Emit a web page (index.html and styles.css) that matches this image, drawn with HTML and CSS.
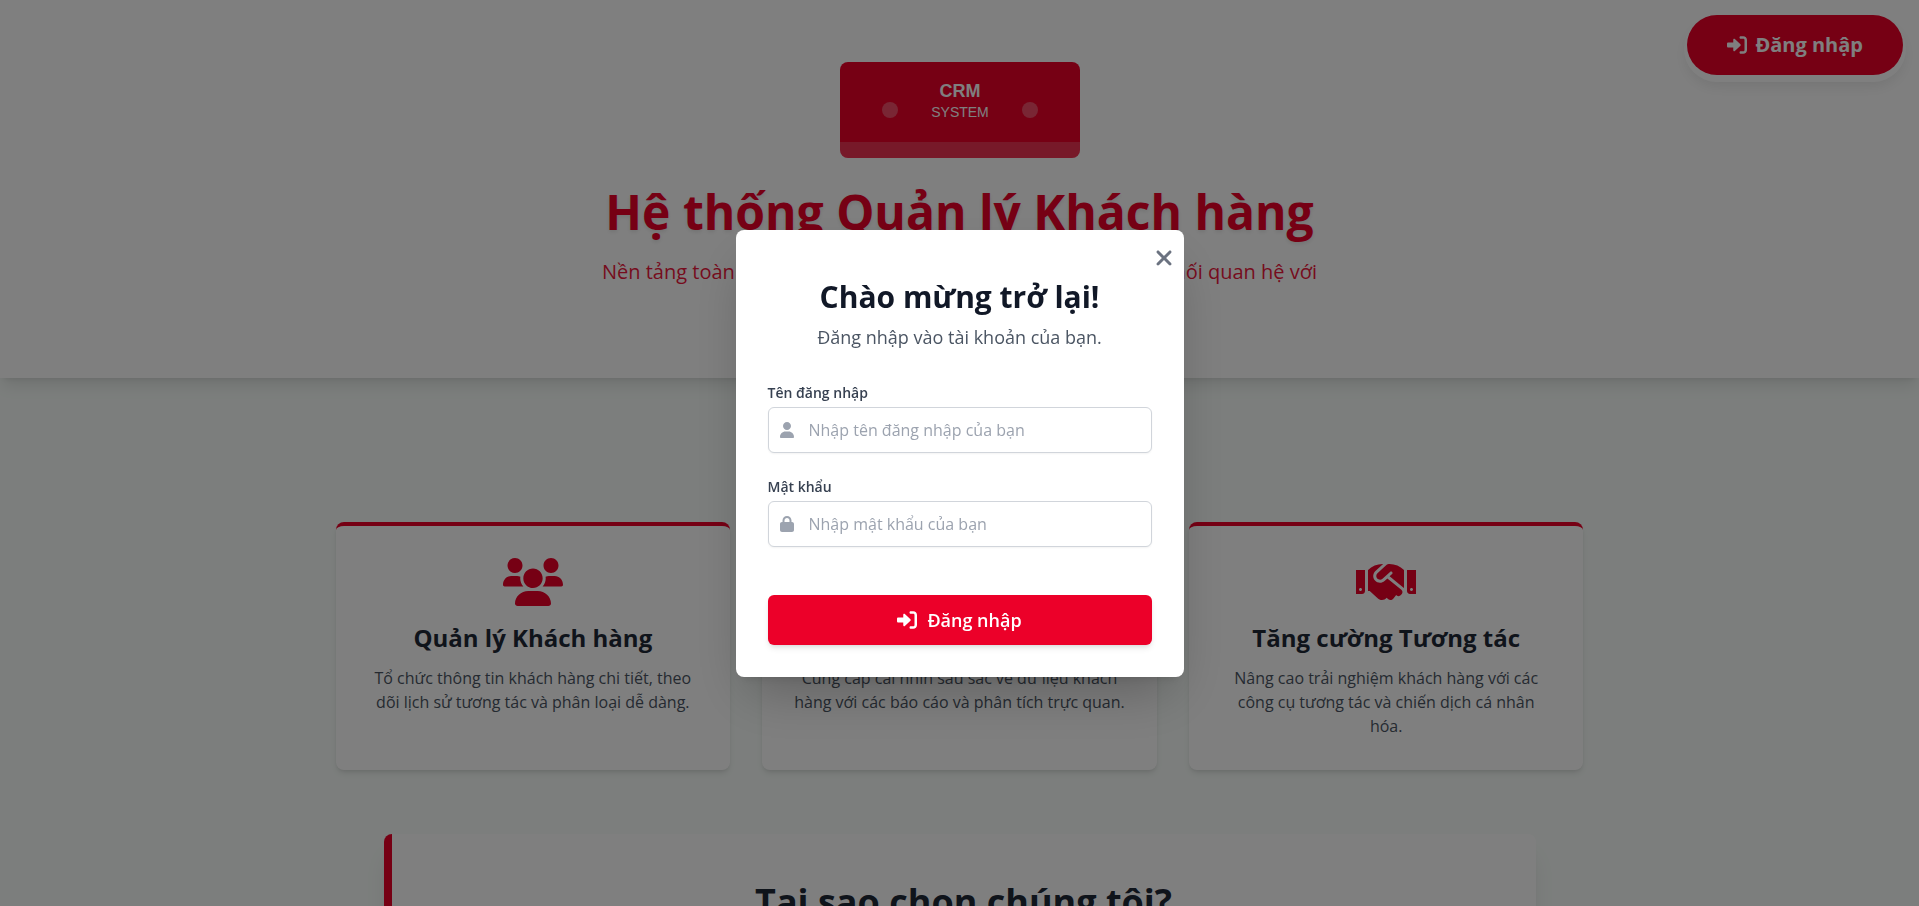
FILE: index.html
```html
<!DOCTYPE html>
<html lang="vi">
<head>
<meta charset="utf-8">
<meta name="viewport" content="width=device-width, initial-scale=1">
<title>Hệ thống Quản lý Khách hàng</title>
<link rel="stylesheet" href="styles.css">
</head>
<body>
<svg class="sprite" aria-hidden="true">
  <symbol id="sign-in" viewBox="0 0 512 512"><path d="M344.7 238.5l-144.1-136C193.7 95.97 183.4 94.17 174.6 97.95C165.8 101.8 160.1 110.4 160.1 120V192H32.02C14.33 192 0 206.3 0 224v64c0 17.68 14.33 32 32.02 32h128.1v72c0 9.578 5.707 18.25 14.51 22.05c8.803 3.781 19.03 1.984 26-4.594l144.1-136C354.3 264.4 354.3 247.6 344.7 238.5zM416 32h-64c-17.67 0-32 14.33-32 32s14.33 32 32 32h64c17.67 0 32 14.33 32 32v256c0 17.67-14.33 32-32 32h-64c-17.67 0-32 14.33-32 32s14.33 32 32 32h64c53.02 0 96-42.98 96-96V128C512 74.98 469 32 416 32z"/></symbol>
</svg>

<header class="hero">
  <button class="login-pill" type="button"><svg class="icon-20" aria-hidden="true"><use href="#sign-in"/></svg>Đăng nhập</button>
  <svg class="logo" viewBox="0 0 240 96" role="img" aria-label="CRM System">
    <defs><clipPath id="logo-shape"><rect width="240" height="96" rx="8"/></clipPath></defs>
    <g clip-path="url(#logo-shape)">
      <rect width="240" height="96" fill="#ec0029"/>
      <rect y="80" width="240" height="16" fill="#fff" fill-opacity=".2"/>
    </g>
    <circle cx="50" cy="48" r="8" fill="#fff" fill-opacity=".3"/>
    <circle cx="190" cy="48" r="8" fill="#fff" fill-opacity=".3"/>
    <text class="logo-name" x="120" y="35" text-anchor="middle">CRM</text>
    <text class="logo-sub" x="120" y="55" text-anchor="middle">SYSTEM</text>
  </svg>
  <h1 class="hero-title">Hệ thống Quản lý Khách hàng</h1>
  <p class="hero-text">Nền tảng toàn diện giúp bạn quản lý, chăm sóc và phát triển mối quan hệ với khách hàng.</p>
</header>

<main class="content">
  <section class="features">
    <article class="card">
      <svg class="card-icon" viewBox="0 0 640 512" aria-hidden="true"><path d="M319.9 320c57.41 0 103.1-46.56 103.1-104c0-57.44-46.54-104-103.1-104c-57.41 0-103.1 46.56-103.1 104C215.9 273.4 262.4 320 319.9 320zM369.9 352H270.1C191.6 352 128 411.7 128 485.3C128 500.1 140.7 512 156.4 512h327.2C499.3 512 512 500.1 512 485.3C512 411.7 448.4 352 369.9 352zM512 160c44.18 0 80-35.82 80-80S556.2 0 512 0c-44.18 0-80 35.82-80 80S467.8 160 512 160zM183.9 216c0-5.449 .9824-10.63 1.609-15.91C174.6 194.1 162.6 192 149.9 192H88.08C39.44 192 0 233.8 0 285.3C0 295.6 7.887 304 17.62 304h199.5C196.7 280.2 183.9 249.7 183.9 216zM128 160c44.18 0 80-35.82 80-80S172.2 0 128 0C83.82 0 48 35.82 48 80S83.82 160 128 160zM551.9 192h-61.84c-12.8 0-24.88 3.037-35.86 8.24C454.8 205.5 455.8 210.6 455.8 216c0 33.71-12.78 64.21-33.16 88h199.7C632.1 304 640 295.6 640 285.3C640 233.8 600.6 192 551.9 192z"/></svg>
      <h2 class="card-title">Quản lý Khách hàng</h2>
      <p class="card-text">Tổ chức thông tin khách hàng chi tiết, theo dõi lịch sử tương tác và phân loại dễ dàng.</p>
    </article>
    <article class="card">
      <svg class="card-icon" viewBox="0 0 640 512" aria-hidden="true"><path d="M96 32v384h480v64H32V32zM176 352V224h64v128zM304 352V128h64v224zM432 352V64h64v288z"/></svg>
      <h2 class="card-title">Phân tích Dữ liệu</h2>
      <p class="card-text">Cung cấp cái nhìn sâu sắc về dữ liệu khách hàng với các báo cáo và phân tích trực quan.</p>
    </article>
    <article class="card">
      <svg class="card-icon" viewBox="0 0 640 512" aria-hidden="true"><path d="M0 383.9l64 .0404c17.75 0 32-14.29 32-32.03V128.3L0 128.3V383.9zM48 320.1c8.75 0 16 7.118 16 15.99c0 8.742-7.25 15.99-16 15.99S32 344.8 32 336.1C32 327.2 39.25 320.1 48 320.1zM348.8 64c-7.941 0-15.66 2.969-21.52 8.328L228.9 162.3C228.8 162.5 228.8 162.7 228.6 162.7C212 178.3 212.3 203.2 226.5 218.7c12.75 13.1 39.38 17.62 56.13 2.75C282.8 221.3 282.9 221.3 283 221.2l79.88-73.1c6.5-5.871 16.75-5.496 22.62 1c6 6.496 5.5 16.62-1 22.62l-26.12 23.87L504 313.7c2.875 2.496 5.5 4.996 7.875 7.742V127.1c-40.98-40.96-96.48-63.88-154.4-63.88L348.8 64zM334.6 217.4l-30 27.49c-29.75 27.11-75.25 24.49-101.8-4.371C176 211.2 178.1 165.7 207.3 138.9L289.1 64H282.5C224.7 64 169.1 87.08 128.2 127.9L128 351.8l18.25 .0369l90.5 81.82c27.5 22.37 67.75 18.12 90-9.246l18.12 15.24c15.88 12.1 39.38 10.5 52.38-5.371l31.38-38.6l5.374 4.498c13.75 11 33.1 9.002 45-4.748l9.538-11.78c11.12-13.75 9.036-33.78-4.694-44.93L334.6 217.4zM544 128.4v223.6c0 17.62 14.25 32.05 31.1 32.05L640 384V128.1L544 128.4zM592 352c-8.75 0-16-7.246-16-15.99c0-8.875 7.25-15.99 16-15.99S608 327.2 608 336.1C608 344.8 600.8 352 592 352z"/></svg>
      <h2 class="card-title">Tăng cường Tương tác</h2>
      <p class="card-text">Nâng cao trải nghiệm khách hàng với các công cụ tương tác và chiến dịch cá nhân hóa.</p>
    </article>
  </section>
  <section class="why">
    <h2 class="why-title">Tại sao chọn chúng tôi?</h2>
  </section>
</main>

<div class="overlay">
  <div class="modal" role="dialog" aria-modal="true" aria-labelledby="modal-title">
    <button class="close" type="button" aria-label="Đóng"><svg class="close-icon" viewBox="0 0 320 512" aria-hidden="true"><path d="M310.6 361.4c12.5 12.5 12.5 32.75 0 45.25C304.4 412.9 296.2 416 288 416s-16.38-3.125-22.62-9.375L160 301.3L54.63 406.6C48.38 412.9 40.19 416 32 416S15.63 412.9 9.375 406.6c-12.5-12.5-12.5-32.75 0-45.25l105.4-105.4L9.375 150.6c-12.5-12.5-12.5-32.75 0-45.25s32.75-12.5 45.25 0L160 210.8l105.4-105.4c12.5-12.5 32.75-12.5 45.25 0s12.5 32.75 0 45.25l-105.4 105.4L310.6 361.4z"/></svg></button>
    <h2 class="modal-title" id="modal-title">Chào mừng trở lại!</h2>
    <p class="modal-text">Đăng nhập vào tài khoản của bạn.</p>
    <form class="form">
      <div class="field">
        <label class="label" for="username">Tên đăng nhập</label>
        <div class="control">
          <svg class="control-icon" viewBox="0 0 448 512" aria-hidden="true"><path d="M224 256c70.7 0 128-57.31 128-128s-57.3-128-128-128C153.3 0 96 57.31 96 128S153.3 256 224 256zM274.7 304H173.3C77.61 304 0 381.6 0 477.3c0 19.14 15.52 34.67 34.66 34.67h378.7C432.5 512 448 496.5 448 477.3C448 381.6 370.4 304 274.7 304z"/></svg>
          <input class="input" id="username" type="text" placeholder="Nhập tên đăng nhập của bạn">
        </div>
      </div>
      <div class="field">
        <label class="label" for="password">Mật khẩu</label>
        <div class="control">
          <svg class="control-icon" viewBox="0 0 448 512" aria-hidden="true"><path d="M80 192V144C80 64.47 144.5 0 224 0C303.5 0 368 64.47 368 144V192H384C419.3 192 448 220.7 448 256V448C448 483.3 419.3 512 384 512H64C28.65 512 0 483.3 0 448V256C0 220.7 28.65 192 64 192H80zM144 192H304V144C304 99.82 268.2 64 224 64C179.8 64 144 99.82 144 144V192z"/></svg>
          <input class="input" id="password" type="password" placeholder="Nhập mật khẩu của bạn">
        </div>
      </div>
      <button class="submit" type="submit"><svg class="icon-20" aria-hidden="true"><use href="#sign-in"/></svg>Đăng nhập</button>
    </form>
  </div>
</div>
</body>
</html>
```

FILE: styles.css
```css
*, *::before, *::after { box-sizing: border-box; }

html, body { height: 100%; }

body {
  margin: 0;
  overflow: hidden;
  font-family: "Open Sans", "Noto Sans", sans-serif;
  font-size: 16px;
  line-height: 24px;
  color: #1f2937;
  background: #f8fdfa;
}

h1, h2, p { margin: 0; }

button, input { font: inherit; }

button { border: 0; cursor: pointer; }

svg { display: block; fill: currentColor; }

.sprite { position: absolute; width: 0; height: 0; }

.icon-20 { width: 20px; height: 20px; }

.hero {
  position: relative;
  display: flex;
  flex-direction: column;
  align-items: center;
  padding: 62px 16px 64px;
  text-align: center;
  color: #ec0029;
  background: #fff;
  box-shadow: 0 10px 15px -3px rgba(0, 0, 0, .1), 0 4px 6px -4px rgba(0, 0, 0, .1);
}

.login-pill {
  position: absolute;
  top: 15px;
  right: 16px;
  display: flex;
  align-items: center;
  gap: 8px;
  padding: 16px 40px;
  border-radius: 30px;
  font-size: 20px;
  line-height: 28px;
  font-weight: 700;
  color: #fff;
  background: #ec0029;
  box-shadow: 0 4px 0 3px #fff, 0 10px 15px 0 rgba(0, 0, 0, .1);
}

.logo { width: 240px; height: 96px; margin-bottom: 24px; }

.logo text { font-family: "Liberation Sans", Arial, sans-serif; fill: #fff; }

.logo-name { font-size: 18px; font-weight: 700; }

.logo-sub { font-size: 14px; }

.hero-title {
  margin-bottom: 16px;
  font-size: 48px;
  line-height: 60px;
  font-weight: 700;
  text-shadow: 0 2px 4px rgba(0, 0, 0, .1);
}

.hero-text {
  max-width: 768px;
  font-size: 20px;
  line-height: 28px;
  opacity: .9;
}

.content { padding: 144px 16px 64px; }

.features {
  display: grid;
  grid-template-columns: repeat(3, 1fr);
  gap: 32px;
  max-width: 1248px;
  margin: 0 auto 64px;
}

.card {
  display: flex;
  flex-direction: column;
  align-items: center;
  padding: 32px;
  border-top: 4px solid #ec0029;
  border-radius: 8px;
  text-align: center;
  background: #fff;
  box-shadow: 0 4px 6px -1px rgba(0, 0, 0, .1), 0 2px 4px -2px rgba(0, 0, 0, .1);
}

.card-icon { width: 60px; height: 48px; margin-bottom: 16px; color: #ec0029; }

.card-title { margin-bottom: 12px; font-size: 24px; line-height: 32px; font-weight: 700; }

.card-text { color: #4b5563; }

.why {
  max-width: 1152px;
  margin: 0 auto;
  padding: 48px;
  border-left: 8px solid #ec0029;
  border-radius: 8px;
  text-align: center;
  background: #fff;
  box-shadow: 0 20px 25px -5px rgba(0, 0, 0, .1), 0 8px 10px -6px rgba(0, 0, 0, .1);
}

.why-title { font-size: 36px; line-height: 40px; font-weight: 700; }

.overlay {
  position: fixed;
  inset: 0;
  display: flex;
  align-items: center;
  justify-content: center;
  background: rgba(0, 0, 0, .5);
}

.modal {
  position: relative;
  width: 100%;
  max-width: 448px;
  padding: 49px 32px 32px;
  border-radius: 8px;
  text-align: center;
  background: #fff;
  box-shadow: 0 25px 50px -12px rgba(0, 0, 0, .25), 0 8px 10px -6px rgba(0, 0, 0, .1);
}

.close {
  position: absolute;
  top: 16px;
  right: 12px;
  padding: 0;
  color: #6b7280;
  background: none;
}

.close-icon { width: 16px; height: 24px; }

.modal-title { margin-bottom: 8px; font-size: 30px; line-height: 36px; font-weight: 700; color: #111827; }

.modal-text { margin-bottom: 32px; font-size: 18px; line-height: 28px; color: #4b5563; }

.field { margin-bottom: 24px; text-align: left; }

.label {
  display: block;
  margin-bottom: 4px;
  font-size: 14px;
  line-height: 20px;
  font-weight: 600;
  color: #374151;
}

.control { position: relative; }

.control-icon {
  position: absolute;
  top: 15px;
  left: 12px;
  width: 14px;
  height: 16px;
  color: #9ca3af;
}

.input {
  display: block;
  width: 100%;
  padding: 10px 12px 10px 40px;
  border: 1px solid #d1d5db;
  border-radius: 6px;
  line-height: 24px;
  color: #111827;
  background: #fff;
  box-shadow: 0 1px 2px rgba(0, 0, 0, .05);
}

.input::placeholder { color: #9ca3af; opacity: 1; }

.submit {
  display: flex;
  align-items: center;
  justify-content: center;
  gap: 10px;
  width: 100%;
  margin-top: 48px;
  padding: 11px 16px;
  border-radius: 6px;
  font-size: 18px;
  line-height: 28px;
  font-weight: 600;
  color: #fff;
  background: #ec0029;
  box-shadow: 0 4px 6px -1px rgba(0, 0, 0, .1), 0 2px 4px -2px rgba(0, 0, 0, .1);
}
```
